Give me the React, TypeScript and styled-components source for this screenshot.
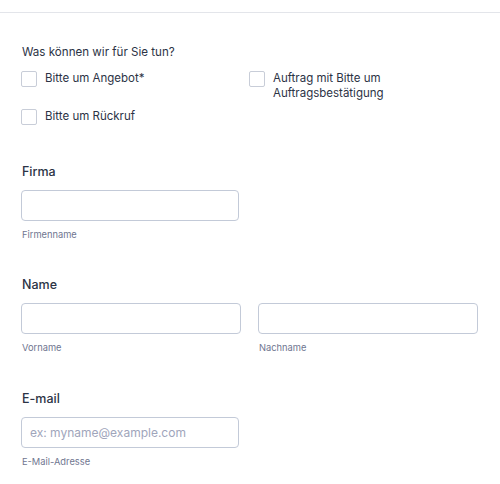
import React from "react";
import styled, { createGlobalStyle } from "styled-components";

const Global = createGlobalStyle`
  html, body { margin: 0; padding: 0; background: #ffffff; }
  body { font-family: Inter, "Noto Sans", sans-serif; color: #2c3345; }
  * { box-sizing: border-box; }
`;

const Page = styled.div`
  width: 500px;
  height: 484px;
  overflow: hidden;
  background: #fff;
`;

const TopRule = styled.div`
  height: 13px;
  border-bottom: 1px solid #e3e5ea;
`;

const Form = styled.div`
  padding: 30px 22px 0 22px;
  display: flex;
  flex-direction: column;
`;

const Section = styled.section<{ $mb: number }>`
  display: flex;
  flex-direction: column;
  margin-bottom: ${(p) => p.$mb}px;
`;

const Question = styled.div`
  font-size: 11.6px;
  line-height: 18px;
  color: #2c3345;
  margin-bottom: 10px;
`;

const FieldLabel = styled.div`
  font-size: 12.5px;
  line-height: 18px;
  font-weight: 500;
  color: #2c3345;
  margin-bottom: 9px;
`;

const CheckGrid = styled.div`
  display: grid;
  grid-template-columns: 228px 228px;
  row-gap: 8px;
`;

const CheckRow = styled.label`
  display: flex;
  align-items: flex-start;
  gap: 8px;
  font-size: 11.5px;
  line-height: 15px;
  color: #2c3345;
`;

const Box = styled.span`
  flex: none;
  width: 16px;
  height: 16px;
  margin-left: -1px;
  border: 1px solid #c8cdd8;
  border-radius: 2px;
  background: #fff;
`;

const Row = styled.div`
  display: flex;
  gap: 18px;
`;

const Field = styled.div<{ $w: number }>`
  display: flex;
  flex-direction: column;
  width: ${(p) => p.$w}px;
  margin-left: -1px;
`;

const Input = styled.input`
  height: 31px;
  width: 100%;
  border: 1px solid #c3cad8;
  border-radius: 4px;
  padding: 0 8px;
  font-family: Inter, "Noto Sans", sans-serif;
  font-size: 12px;
  color: #2c3345;
  background: #fff;
  outline: none;
  &::placeholder { color: #a0a5bb; }
`;

const Sub = styled.div`
  margin-top: 8px;
  margin-left: 1px;
  font-size: 9.3px;
  line-height: 12px;
  color: #6f7690;
`;

export default function App() {
  return (
    <Page>
      <Global />
      <TopRule />
      <Form>
        <Section $mb={38}>
          <Question>Was können wir für Sie tun?</Question>
          <CheckGrid>
            <CheckRow><Box />Bitte um Angebot*</CheckRow>
            <CheckRow><Box />Auftrag mit Bitte um<br />Auftragsbestätigung</CheckRow>
            <CheckRow><Box />Bitte um Rückruf</CheckRow>
          </CheckGrid>
        </Section>
        <Section $mb={35}>
          <FieldLabel>Firma</FieldLabel>
          <Field $w={218}>
            <Input />
            <Sub>Firmenname</Sub>
          </Field>
        </Section>
        <Section $mb={36}>
          <FieldLabel>Name</FieldLabel>
          <Row>
            <Field $w={220}>
              <Input />
              <Sub>Vorname</Sub>
            </Field>
            <Field $w={220}>
              <Input />
              <Sub>Nachname</Sub>
            </Field>
          </Row>
        </Section>
        <Section $mb={0}>
          <FieldLabel>E-mail</FieldLabel>
          <Field $w={218}>
            <Input placeholder="ex: myname@example.com" />
            <Sub>E-Mail-Adresse</Sub>
          </Field>
        </Section>
      </Form>
    </Page>
  );
}
